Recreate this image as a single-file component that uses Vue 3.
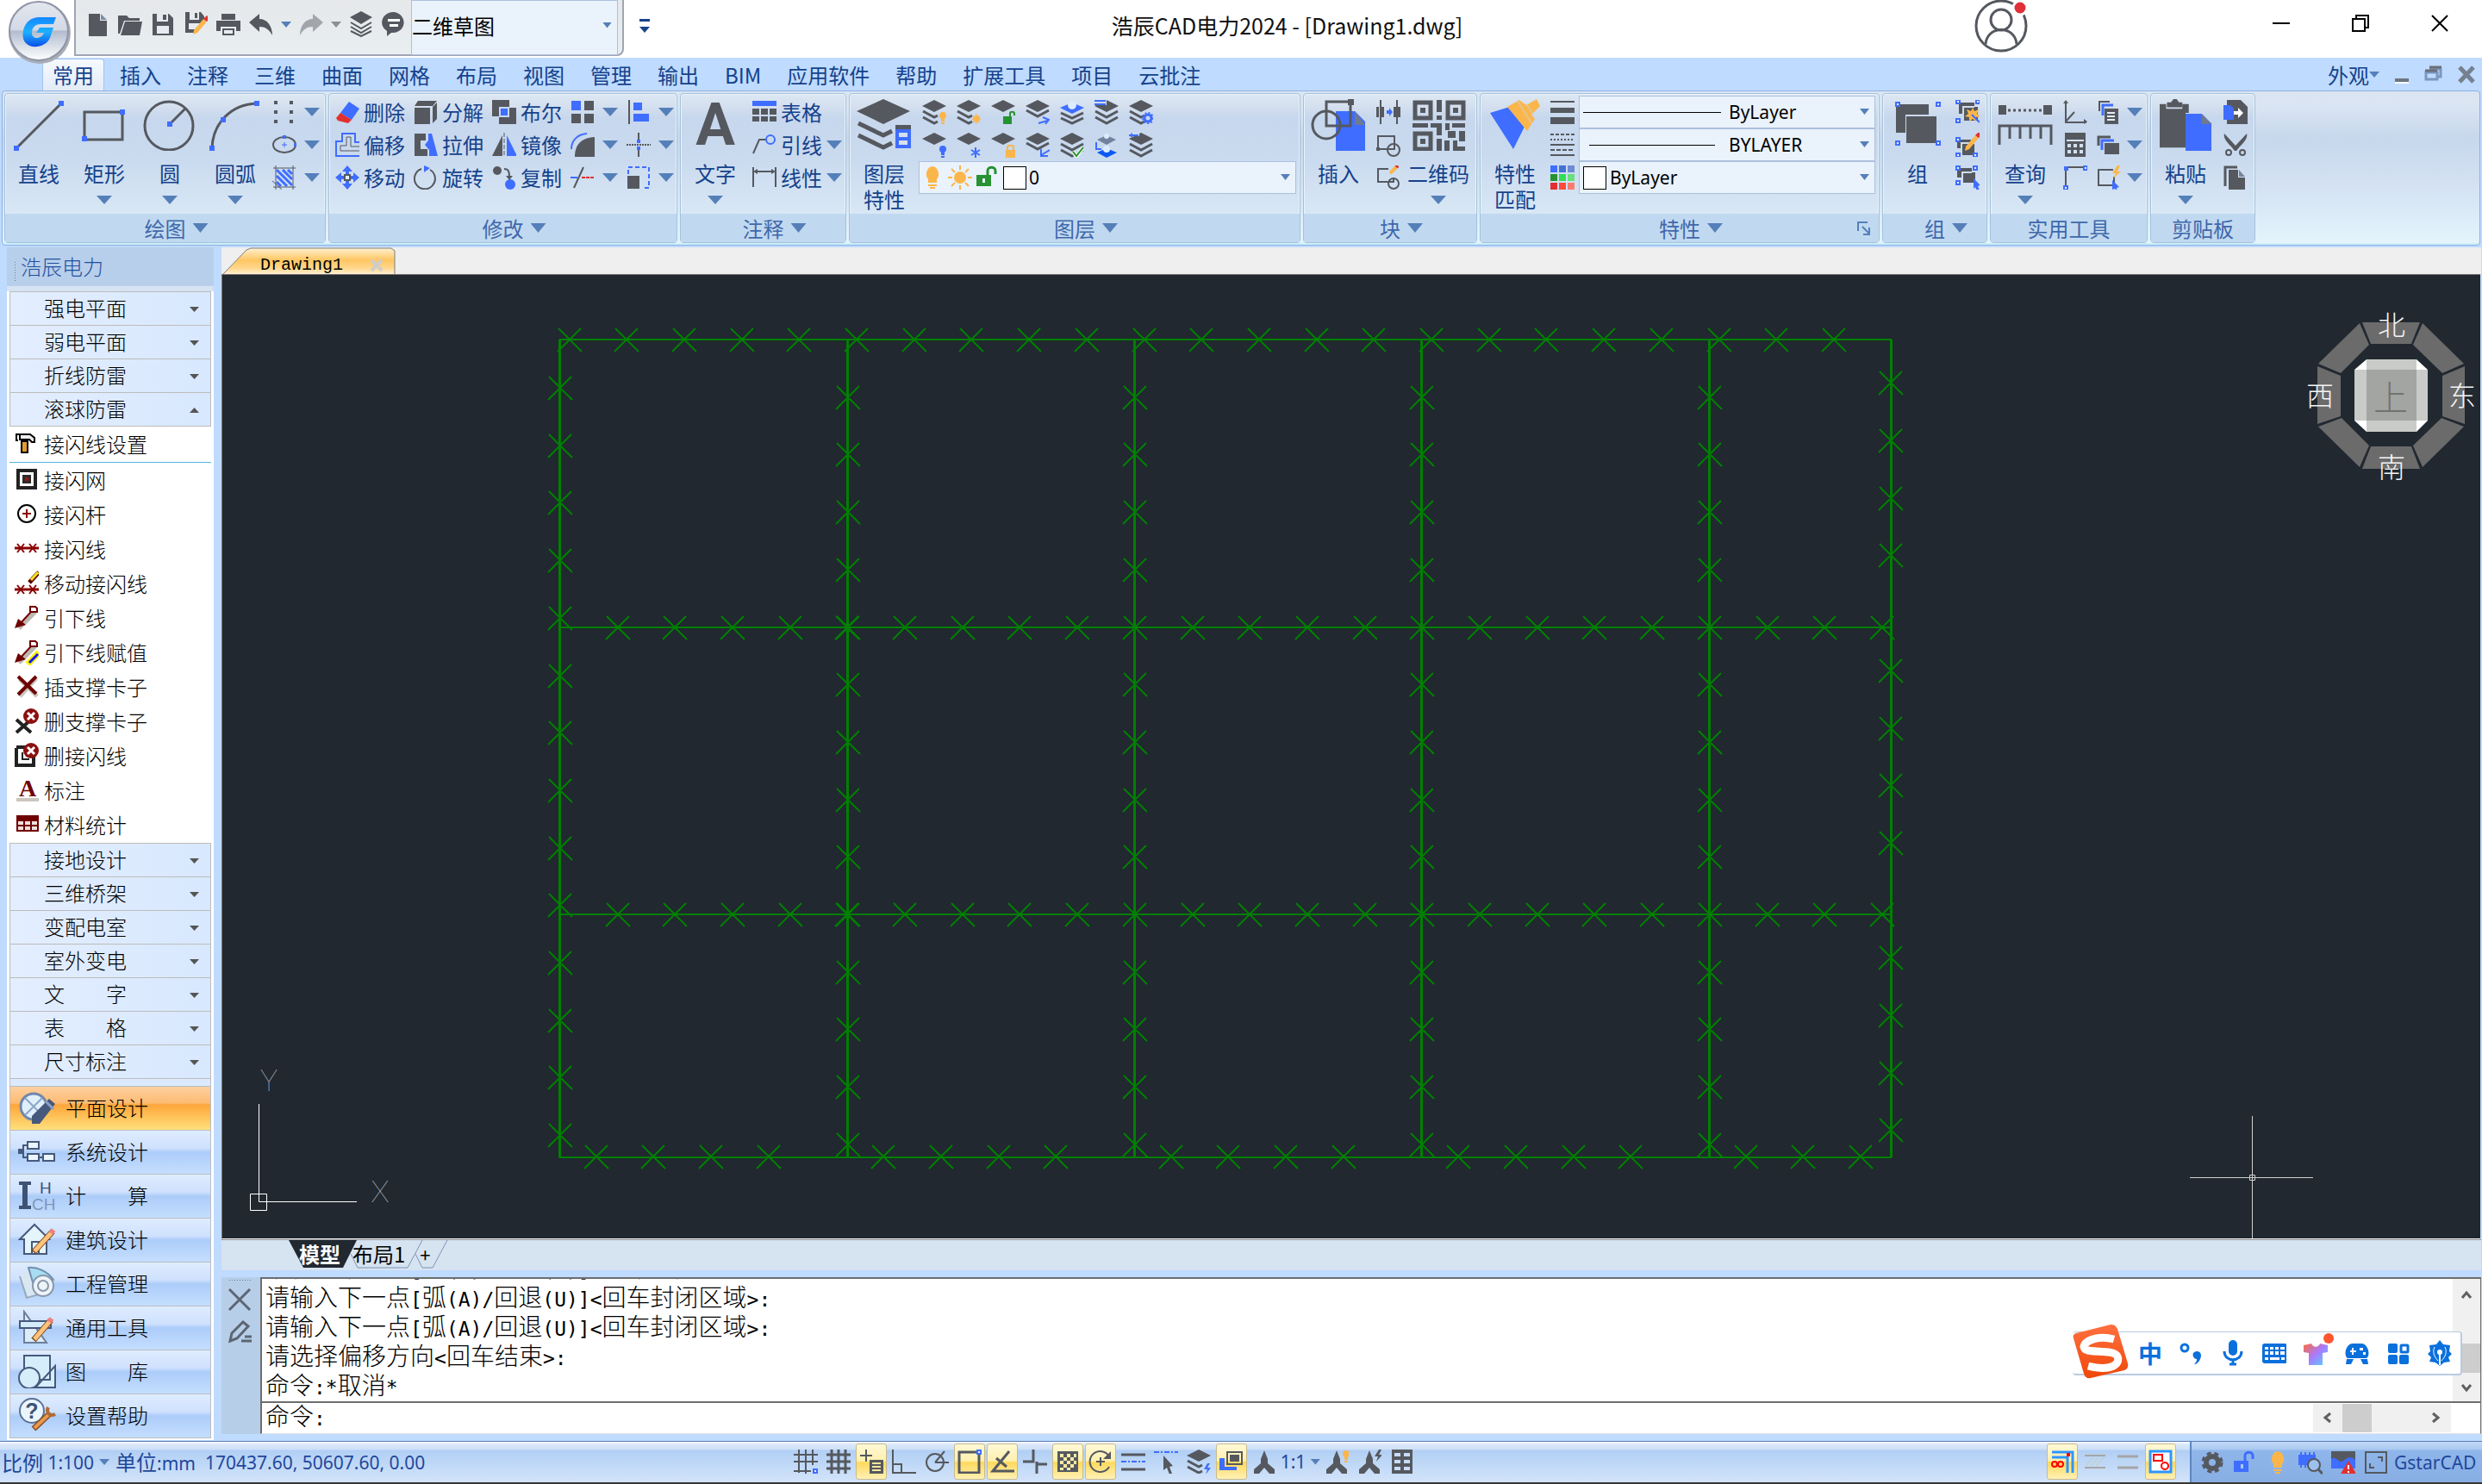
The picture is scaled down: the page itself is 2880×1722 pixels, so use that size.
<script setup>
import { h } from 'vue'

const D = '#55595f'
const B = '#3f6dff'
const O = '#fbb64b'
const G = '#279231'
const R = '#e23030'
const f = (c, p) => `<path fill="${c}" d="${p}"/>`
const s = (c, p, w = 2, extra = '') => `<path fill="none" stroke="${c}" stroke-width="${w}" ${extra} d="${p}"/>`

const top = f(D, 'M14 0L28 7 14 14 0 7z')
const stack = top + s(D, 'M1 13l13 7 13-7M1 20l13 7 13-7', 3)
const half = top + s(D, 'M1 13l13 7 4-2M1 20l13 7 4-2', 3)
const bulb = (x, y, c) => `<g fill="${c}"><circle cx="${x}" cy="${y}" r="4"/><path d="M${x - 2} ${y + 2}h4v5h-4zM${x - 2} ${y + 8}h4v2h-4z"/></g>`
const pencil = (x, y) => f(O, `M${x} ${y}l-11 13-1 5 5-2 11-13z`) + f(R, `M${x} ${y}l4-4 4 3-4 4z`)
const nodes = (c, list) => list.map(([x, y]) => `<rect x="${x - 2}" y="${y - 2}" width="4" height="4" fill="#e8f0ff" stroke="${c}" stroke-width="2"/>`).join('')
const dots = (c, list, r = 3) => list.map(([x, y]) => f(c, `M${x - r} ${y - r}h${2 * r}v${2 * r}h${-2 * r}z`)).join('')
const wire = c => s(c, 'M0 14h28', 3) + s(c, 'M3 9l8 10M11 9L3 19M17 9l8 10M25 9l-8 10', 2)
const person = f(D, 'M14 1l4 10v5l8 7v5h-6l-6-7-6 7H2v-5l8-7v-5z')

const icons = {
  newFile: f(D, 'M4 2h13v8h8v18H4z') + f('#7d8fa6', 'M18 2l7 7h-7z'),
  open: f(D, 'M0 4h10l3 3h12v3H7L2 25H0z') + f(D, 'M8 11h20l-3 16H3z'),
  save: f(D, 'M2 2h5v9h13V2h1l5 5v20H2z') + f(D, 'M14 3h4v6h-4z') + f('#e8ecf0', 'M7 16h14v9H7z'),
  saveAs: f(D, 'M2 0h5v9h11V0h2l4 5v7l-12 12H2z') + f(D, 'M13 1h3v6h-3z') + f('#e8ecf0', 'M6 13h13v7H6z') + pencil(23, 8),
  print: f(D, 'M6 2h16v7H6zM0 10h28v12h-5v-5H5v5H0z') + f(D, 'M7 19h14v8H7z') + f('#e8ecf0', 'M9 21h10v4H9z'),
  undo: f(D, 'M0 12L12 2v6c9 0 15 8 15 19-4-7-8-10-15-10v6z'),
  redo: f('#a2a6ab', 'M28 12L16 2v6C7 8 1 16 1 27c4-7 8-10 15-10v6z'),
  stack: f(D, 'M14 0l13 7-13 8L1 7z') + s(D, 'M2 13l12 7 12-7M2 18l12 7 12-7M2 23l12 6 12-6', 2),
  chat: f(D, 'M14 1a13 12 0 1 1-3 24l-5 4v-6A13 12 0 0 1 14 1z') + f('#fff', 'M7 9h14v3H7zM9 15h10v3H9z'),
  line: s(D, 'M6 57L58 5', 3) + dots(B, [[6, 57], [58, 5]], 3),
  rect: s(D, 'M9 15h44v32H9z', 3) + dots(B, [[53, 15], [9, 46]], 3),
  circle: `<circle cx="31" cy="31" r="28" fill="none" stroke="${D}" stroke-width="3"/>` + s(D, 'M32 29L50 11', 3) + dots(B, [[32, 29]], 3),
  arc: s(D, 'M5 57C6 27 28 6 57 5', 3) + dots(B, [[5, 57], [18, 24], [57, 5]], 3),
  points: dots(D, [[4, 3], [22, 3], [4, 14], [22, 14], [4, 25], [22, 25]], 2),
  ellipse: `<ellipse cx="14" cy="14" rx="13" ry="9" fill="none" stroke="${D}" stroke-width="2"/>` + s(B, 'M11 14h6M14 11v6', 1) + dots(B, [[14, 5], [27, 14]], 2),
  hatch: s(D, 'M1 3h26M4 0v28M24 0v28M1 25h26M0 18l11 10', 1) + s(B, 'M5 5l18 18M5 12l12 12M5 19l5 5M12 5l11 11M18 5l5 5', 3),
  erase: f(B, 'M16 2l12 8-9 13-13-8z') + f(R, 'M6 15l13 8-4 4-12-3-2-3z'),
  explode: f(D, 'M1 9h18v19H1zM5 1h22l-5 6H1z') + f(D, 'M22 8l5-5v19l-5 5z'),
  boolean: f(D, 'M0 0h20v9h8v19H8v-9H0z') + f('#c8d8ee', 'M8 8h12v12H8z') + f(B, 'M10 10h8v8h-8z'),
  array: f(B, 'M1 1h11v11H1z') + f(D, 'M16 1h11v11H16zM1 16h11v11H1zM16 16h11v11H16z'),
  align: f(D, 'M2 0h2v28H2z') + f(B, 'M8 3h10v9H8zM8 16h18v9H8z'),
  offset: s(B, 'M28 27H1V10h7V1h15v10h5', 2) + s(D, 'M28 21H6v-6h7V5h5v11h10', 1),
  stretch: f(D, 'M1 1h13v8H8v10h8v8H1z') + f(B, 'M17 1h4l7 26H18v-7l-5-6 4-5z'),
  mirror: f(D, 'M12 3v24H0z') + f(B, 'M17 3v24h12z') + s(D, 'M14 0v28', 1, 'stroke-dasharray="5 2"'),
  fillet: f(D, 'M5 28c0-14 7-22 23-23v23z') + s(B, 'M1 19C1 9 8 2 19 1', 2),
  breakLine: s(D, 'M14 0v8M14 20v8', 2) + s(D, 'M0 14h28', 2, 'stroke-dasharray="2 1"') + dots(B, [[14, 10], [14, 18]], 2),
  move: f(B, 'M14 0l6 7h-4v5h5V8l7 6-7 6v-4h-5v5h4l-6 7-6-7h4v-5H7v4l-7-6 7-6v4h5V7H8z') + f(D, 'M10 10h8v8h-8z') + f('#e8f0ff', 'M12 12h4v4h-4z'),
  rotate: s(D, 'M19 5A12 12 0 1 1 9 4', 2) + f(B, 'M12 0l7 3-7 5z'),
  copy: `<circle cx="6" cy="6" r="5" fill="${D}"/><circle cx="21" cy="22" r="6" fill="${B}"/>` + s(D, 'M14 4c5 0 6 3 6 9', 2) + f(D, 'M16 12h8l-4 5z'),
  trim: s(B, 'M0 14h8', 2) + s(R, 'M13 14h16', 2, 'stroke-dasharray="4 1"') + s(D, 'M4 26L15 2', 2),
  scale: s(B, 'M2 10V2h24v24h-8', 2, 'stroke-dasharray="5 3"') + f(D, 'M1 12h14v15H1z'),
  table: f(B, 'M0 1h28v6H0z') + f(D, 'M0 10h8v7H0zM10 10h8v7h-8zM20 10h8v7h-8zM0 19h8v6H0zM10 19h8v6h-8zM20 19h8v6h-8z'),
  leader: s(D, 'M1 24L8 8h8', 2) + `<circle cx="21" cy="8" r="5" fill="none" stroke="${B}" stroke-width="2"/>`,
  dim: s(D, 'M1 2v23M27 2v23M3 7h22', 2) + f(D, 'M1 7l5-3v6zM27 7l-5-3v6z'),
  layerBig: f(D, 'M31 0l31 14-31 15L0 14z') + s(D, 'M2 28l29 14 10-5M2 42l29 14 10-5', 5) + f(D, 'M45 30h18v5H45z') + f(B, 'M45 35h18v22H45z') + f('#d3e0f1', 'M49 39h10v5H49zM49 48h10v5H49z'),
  l1: half + bulb(24, 18, O), l2: half + `<circle cx="23" cy="22" r="4" fill="${O}"/>` + s(O, 'M17 22h12M23 16v12M19 18l8 8M27 18l-8 8', 1),
  l3: top + f(G, 'M14 19h10v9H14z') + s(G, 'M22 19v-3c0-3 5-3 5 0v2', 2), l4: top + s(D, 'M1 12l13 7 13-7', 3) + s(B, 'M15 27l11-3M20 20l7 3-4 5', 2),
  l5: f(B, 'M14 3l14 6-14 7L0 9z') + s(D, 'M1 15l13 6 13-6M1 21l13 6 13-6', 3) + `<circle cx="14" cy="6" r="5" fill="#dcebff"/>`,
  l6: stack + f('#cfdcee', 'M0 0h14v6H0z') + f(B, 'M0 0h13v2H0zM0 4h13v2H0z'), l7: half + `<circle cx="22" cy="21" r="4" fill="none" stroke="${B}" stroke-width="3" /><circle cx="22" cy="21" r="6" fill="none" stroke="${B}" stroke-width="2" stroke-dasharray="2 2"/>`,
  l8: top + bulb(24, 19, B), l9: top + s(B, 'M22 17v12M17 20l10 6M27 20l-10 6', 2), l10: top + f(O, 'M17 20h11v9H17z') + s(O, 'M19 20v-3c0-3 7-3 7 0v3', 2),
  l11: top + s(D, 'M1 12l13 7 13-7', 3) + s(B, 'M28 20l-10 6M18 19v8h8', 2), l12: stack + s('#e6f3ea', 'M15 22l4 5 8-10', 5) + s(G, 'M15 22l4 5 8-10', 2),
  l13: f('#70839f', 'M14 3l11 5-11 6L3 8z') + f('#0b59f0', 'M14 18l12 5-12 6L3 23z') + '<circle cx="14" cy="4" r="3" fill="#dcebff"/><circle cx="14" cy="19" r="4" fill="#dcebff"/>' + s(B, 'M2 11v8h6', 2),
  l14: stack + f('#cfdcee', 'M0 0h12v4H0z') + s(B, 'M0 3h11', 2) + f(B, 'M0 3l4-3v6z'),
  bulb: f(O, 'M14 1a8 9 0 0 1 5 15v4H9v-4A8 9 0 0 1 14 1zM9 22h10v2H9zM11 25h6v2h-6z'),
  sun: `<circle cx="14" cy="14" r="7" fill="${O}"/>` + s(O, 'M14 0v5M14 23v5M0 14h5M23 14h5M4 4l4 4M20 20l4 4M24 4l-4 4M4 24l4-4', 2),
  unlock: f(G, 'M1 11h17v13H1z') + s(G, 'M14 11V6c0-5 9-5 9 0v4', 3) + f('#eaf2fc', 'M8 15h3v5H8z'),
  insert: f(B, 'M29 14h22l12 12v34H29z') + f('#6d7a90', 'M51 14l12 16H51z') + s(D, 'M18 3h28v28H18z', 3) + `<circle cx="18" cy="30" r="16" fill="none" stroke="${D}" stroke-width="3"/>` + f(D, 'M43 0h7v7h-7z'),
  attr: s(D, 'M5 0v28M24 0v28', 2) + f(D, 'M0 8h3v12H0zM6 8h3v12H6zM20 8h9v12h-9z') + f(B, 'M12 12h3V9l4 5-4 5v-3h-3z'),
  shape: s(D, 'M2 4h19v15H2z', 2) + `<circle cx="20" cy="20" r="7" fill="none" stroke="${D}" stroke-width="2"/>` + dots(D, [[2, 19]], 2),
  shapeEdit: s(D, 'M14 4H2v15h18v-5', 2) + `<circle cx="20" cy="21" r="6" fill="none" stroke="${D}" stroke-width="2"/>` + s(O, 'M16 9l7-7', 4) + s(R, 'M23 2l2-2', 4),
  qr: s(D, 'M4 4h18v18H4zM42 4h18v18H42zM4 40h18v18H4z', 5) + f(D, 'M10 10h6v6h-6zM48 10h6v6h-6zM10 46h6v6h-6zM29 1h6v14h-6zM29 19h6v5h-6zM1 28h18v5H1zM22 28h13v14h-6v-9h-7zM29 46h6v15h-6zM39 28h5v8h-5zM47 28h15v5H47zM42 37h9v8h-9zM55 37h7v12h-7zM38 48h6v13h-6zM48 48h5v7h9v6H48z'),
  brush: f(B, 'M0 16l26-8 15 22-14 28z') + f(O, 'M20 9l14-8 8 6 12-7 4 8-10 10 4 5-9 14z') + s('#e4c58f', 'M32 2l16 26M42 6l8 11', 2),
  weight: f(D, 'M0 1h28v2H0zM0 9h28v6H0zM0 20h28v8H0z'),
  linetype: s(D, 'M0 2h28', 2, 'stroke-dasharray="4 2"') + s(D, 'M0 8h28', 2, 'stroke-dasharray="2 2"') + s(D, 'M0 14h28M0 26h28', 2) + s(D, 'M0 20h28', 2, 'stroke-dasharray="5 2"'),
  palette: f('#3f6dff', 'M0 0h8v8H0z') + f('#4470d8', 'M10 0h8v8h-8z') + f('#6f8ad5', 'M20 0h8v8h-8z') + f('#279231', 'M0 10h8v8H0z') + f('#34dc55', 'M10 10h8v8h-8z') + f('#68e07c', 'M20 10h8v8h-8z') + f('#e23030', 'M0 20h8v8H0z') + f('#ff4b3c', 'M10 20h8v8h-8z') + f('#ff7b70', 'M20 20h8v8h-8z'),
  group: f(D, 'M5 6h38v12H16v21H5z') + f(D, 'M17 20h35v31H17z') + nodes(B, [[7, 6], [54, 6], [7, 51], [54, 51]]),
  g1: f(D, 'M4 3h18v5h4v16H10v-8H4z') + s('#cfdcee', 'M9 16V8h13', 2) + f(O, 'M20 9l2 4 5-2-2 5 4 3-5 1v5l-4-3-4 3v-5l-5-1 4-3-2-5 5 2z') + s(B, 'M19 17l9 9', 2) + nodes(B, [[3, 2], [26, 2], [3, 24]]),
  g2: f(D, 'M2 8h16v5h4v13H8v-8H2z') + s('#cfdcee', 'M7 18v-6h10', 2) + pencil(23, 3) + nodes(B, [[3, 8], [3, 26], [23, 26]]),
  g3: f(D, 'M2 3h17v5h4v12H9v-6H2z') + s('#cfdcee', 'M8 14V8h11', 2) + nodes(B, [[3, 3], [23, 3], [3, 20]]) + f(B, 'M21 15l8 8-3 1 2 5-3 1-2-5-2 2z'),
  measure: f(D, 'M1 7h9v11H1zM53 7h10v11H53z') + s(D, 'M12 13h40', 3, 'stroke-dasharray="3 3"') + s(D, 'M2 53V31h60v22M14 32v14M26 32v14M38 32v14M50 32v14', 3),
  axes: s(D, 'M3 2v24h24M3 25l10-11', 2) + f(D, 'M3 0l3 4H0zM28 25l-4 3v-6z'),
  calc: f(D, 'M2 0h24v28H2z') + f('#d3e0f0', 'M4 8h20v2H4zM5 13h4v4H5zM12 13h4v4h-4zM19 13h4v4h-4zM5 20h4v4H5zM12 20h4v4h-4zM19 20h4v4h-4z'),
  snapEdge: s(D, 'M3 2h24M3 2v24', 2) + nodes(B, [[26, 3], [3, 26]]) + f(B, 'M1 1h5v5H1z'),
  u1: s(D, 'M3 13V2h12', 2) + s(B, 'M7 18V6h12', 3) + f(D, 'M9 10h16v18H9z') + f('#e4edf8', 'M12 14h9v2h-9zM12 18h9v2h-9zM12 22h9v2h-9z'),
  u2: s(D, 'M2 15V5h14', 3) + s(B, 'M6 20V9h14', 3) + f(D, 'M9 12h17v13H9z'),
  u3: s(D, 'M19 5H2v18h18V13', 2) + f(O, 'M24 0l-6 9h4l-3 6 9-8h-4l3-7z') + f(B, 'M18 17l8 8-3 1 1 4-3-3-3 1z'),
  paste: f(D, 'M0 6h8v6h20V6h8v11h-4v43H0z') + f(D, 'M9 4h5l3-4h4l3 4h4v6H9z') + f(B, 'M32 18h20l12 12v34H32z') + f('#6d7a90', 'M52 18l12 13H52z'),
  c1: f(D, 'M4 0h16l8 8v20H4z') + f(B, 'M0 6h8l4 4v13H0z') + f('#fff', 'M12 13h5V9l6 6-6 6v-4h-5z'),
  cut: f(D, 'M1 1l13 14L27 1c2 7-7 13-12 20h-2C8 14-1 8 1 1z') + `<g fill="none" stroke="${D}" stroke-width="2"><circle cx="6" cy="23" r="3"/><circle cx="22" cy="23" r="3"/></g>`,
  c3: s(D, 'M2 24V2h14', 3) + f(D, 'M6 5h11v9h8v15H6z') + f('#76859c', 'M18 5l7 8h-7z'),
  hammer: '<path fill="#eee" stroke="#000" stroke-width="2" d="M6 3h12l5 4v5h-3l-3-3H6z"/>' + s('#000', 'M6 3H2v7h2', 2) + '<path fill="#e39b2f" stroke="#000" stroke-width="2" d="M8 11h7v13H8z"/>',
  net: s('#222', 'M4 4h20v20H4z', 4) + f('#2b2b2b', 'M9 9h10v10H9z') + f('#a01010', 'M12 12h4v4h-4z'),
  rod: '<circle cx="14" cy="14" r="10" fill="none" stroke="#000" stroke-width="2"/>' + s('#8b0000', 'M9 14h10M14 9v10'),
  wire: wire('#8b0000'),
  wireMove: `<g transform="translate(0,8)">${wire('#8b0000')}</g>` + s('#5b0000', 'M17 14L28 2', 5) + s('#f2e51a', 'M19 11l8-9', 3),
  down: s('#bdb8b0', 'M5 27L24 8', 5) + s('#700000', 'M6 22L19 8') + '<path fill="#fff" stroke="#700000" stroke-width="2" d="M18 2h6l2 2v4h-8z"/>' + f('#700000', 'M0 27l4-11 9 7z'),
  downSet: s('#bdb8b0', 'M5 27L24 8', 5) + s('#700000', 'M6 22L19 8') + '<path fill="#fff" stroke="#700000" stroke-width="2" d="M18 2h6l2 2v4h-8z"/>' + f('#700000', 'M0 27l4-11 9 7z') + s('#fff200', 'M15 29L28 15', 7) + s('#1414ff', 'M17 27l10-10', 3),
  clip: s('#cbc6be', 'M6 6l20 20M25 5L6 26', 5) + s('#700000', 'M4 3l21 20M25 3L4 24', 4),
  clipDel: s('#222', 'M2 13l17 15M19 13L2 28', 4) + '<circle cx="19" cy="9" r="9" fill="#8b1010"/>' + s('#fff', 'M15 5l8 8M23 5l-8 8', 3),
  wireDel: s('#222', 'M2 6v20h20V14M2 5h12', 4) + s('#222', 'M9 11v8h8', 2) + '<circle cx="19" cy="9" r="9" fill="#8b1010"/>' + s('#fff', 'M15 5l8 8M23 5l-8 8', 3),
  letter: f('#cbc6be', 'M2 24h26v4H2z') + '<text x="15" y="22" text-anchor="middle" font-family="Liberation Serif, serif" font-weight="700" font-size="28" fill="#700000">A</text>',
  stat: f('#700000', 'M2 4h26v19H2z') + f('#f0e0e0', 'M4 11h6v4H4zM12 11h6v4h-6zM20 11h6v4h-6zM4 17h6v4H4zM12 17h6v4h-6zM20 17h6v4h-6z'),
  plan: '<circle cx="18" cy="19" r="15" fill="#dff0fb" stroke="#7187ad" stroke-width="3"/>' + s('#8da5c6', 'M8 9l20 20M28 9L8 29', 2) + f('#46597c', 'M36 10l7 6L25 39h-9v-9z') + s('#8ba0c2', 'M32 13l9 9', 3),
  system: '<g fill="#eaf6fd" stroke="#46597c" stroke-width="2"><path d="M11 9h13v8H11zM11 23h13v8H11zM29 23h13v8H29z"/></g>' + s('#46597c', 'M11 13H6v14h5M24 27h5M1 20h5') + dots('#46597c', [[3, 20]], 3),
  calcBig: f('#3e5275', 'M1 4h14v4h-4v24h4v4H1v-4h4V8H1z') + '<g font-family="Liberation Sans, sans-serif"><text x="25" y="18" font-size="19" fill="#3e5275">H</text><text x="16" y="37" font-size="19" fill="#7f95ba">CH</text></g>',
  house: '<path fill="#e4f5fc" stroke="#46597c" stroke-width="2" d="M2 20L19 3l17 17h-3v17H7V20z"/>' + s('#46597c', 'M16 37V23h8v14') + s('#7a4a20', 'M18 35L40 11', 7) + s('#ffc27a', 'M19 34l20-22', 5) + s('#f08080', 'M38 13l3-4', 6),
  manage: f('#d9e7f3', 'M2 12l10-8 12 30-12 4z') + s('#9aaabd', 'M2 12l8 25 14-4') + '<path fill="#a8dcf3" stroke="#7190ae" stroke-width="2" d="M12 2c10-1 22 4 29 14L18 22z"/><circle cx="29" cy="23" r="12" fill="#eef3f8" stroke="#8798ac" stroke-width="2"/><circle cx="29" cy="23" r="6" fill="none" stroke="#8798ac" stroke-width="2"/>',
  tools: '<path fill="#dcebf8" stroke="#6d7f9c" stroke-width="2" d="M7 2l26 36H7z"/><path fill="#d4ecfb" stroke="#46597c" stroke-width="2" d="M2 13h36v8H2z"/>' + s('#7a4a20', 'M18 35L38 12', 7) + s('#ffc27a', 'M19 34l18-21', 5) + s('#f08080', 'M36 14l3-4', 6),
  library: '<g fill="#d5eefa" stroke="#46597c" stroke-width="2"><path d="M7 2h30v28H7zM43 14v25H20z"/><circle cx="13" cy="28" r="12"/></g>',
  help: '<circle cx="16" cy="15" r="14" fill="#eaf6fd" stroke="#5b7196" stroke-width="2"/><text x="16" y="24" text-anchor="middle" font-family="Liberation Sans, sans-serif" font-weight="700" font-size="25" fill="#3e5275">?</text>' + s('#8a4f22', 'M18 36L36 19', 7) + s('#e89a50', 'M19 35l17-16', 4) + s('#b06a35', 'M35 11c-3 6 2 11 8 8', 4),
  grid1: s(D, 'M6 0v27M14 0v28M22 0v18M0 6h28M0 14h28M0 25h20', 2) + nodes(B, [[25, 25]]),
  grid2: s(D, 'M6 0v28M14 0v28M22 0v28M0 6h28M0 14h28M0 22h28', 3),
  dyn: s(D, 'M8 0v14M1 7h14', 2) + f(D, 'M12 12h16v16H12z') + f('#ffe79a', 'M15 15h10v2H15zM15 19h10v2H15zM15 23h10v2H15z'),
  ortho: s(D, 'M1 0v27h27M2 17h9v9', 2), polar: `<circle cx="12" cy="15" r="10" fill="none" stroke="${D}" stroke-width="2"/>` + s(D, 'M12 15h16M12 15L23 2', 2),
  osnap: s(D, 'M2 3h23v24H2z', 3) + nodes(B, [[25, 3]]), track: s(D, 'M22 2L3 25h25M7 10l12 10', 3),
  cross: s(D, 'M12 0v14H0M15 17h13M16 14v14', 3),
  trans: f(D, 'M2 2h24v24H2z') + f('#ffeaa5', 'M5 5h4v4H5zM13 5h4v4h-4zM9 9h4v4H9zM17 9h4v4h-4zM5 13h4v4H5zM13 13h4v4h-4zM9 17h4v4H9zM17 17h4v4h-4zM5 21h4v3H5zM13 21h4v3h-4zM21 5h3v4h-3zM21 13h3v4h-3z'),
  cycle: s(D, 'M24 8A12 12 0 1 0 24 20M14 9v10M9 14h10', 2) + f(D, 'M26 2v9h-9z'),
  lwt: s(D, 'M0 6h28M0 23h28', 3) + s(B, 'M0 14h28', 2, 'stroke-dasharray="6 2 2 2"'),
  sel: s(B, 'M0 3h28', 2, 'stroke-dasharray="6 2 2 2"') + f(D, 'M11 7l11 12-4 1 3 8-3 1-3-8-4 3z'),
  layerFlash: half + f(B, 'M24 16l-4 7h4l-2 6 6-8h-4l3-5z'),
  windows: f(B, 'M0 10h6v10h14v4H0z') + s(D, 'M9 3h17v14H9z', 2) + f(D, 'M12 6h11v8H12z'),
  person, personBulb: person + bulb(25, 5, O), personFlash: person + f(D, 'M25 0l-5 8h4l-2 6 7-8h-4l3-6z'),
  cells: f(D, 'M2 0h24v28H2z') + f('#c9dcf6', 'M5 4h7v4H5zM16 4h7v4h-7zM5 12h7v4H5zM16 12h7v4h-7zM5 20h7v4H5zM16 20h7v4h-7z'),
  r1: s('#2e96ff', 'M2 3h24v24M2 9h18v18', 3) + '<g fill="none" stroke="#f00" stroke-width="2"><circle cx="5" cy="17" r="3"/><circle cx="12" cy="17" r="3"/></g>' + f('#f00', 'M19 4h4v4h-4z'),
  r2: s('#a6a6a6', 'M2 7h24M2 21h24', 2) + s('#c9d0a0', 'M3 19l9-10M9 19l9-10M15 19l9-10', 1), r3: s('#a6a6a6', 'M2 8h24M2 21h24', 3),
  r4: '<path fill="#fff" stroke="#2e96ff" stroke-width="3" d="M2 2h24v24H2z"/>' + s('#f00', 'M6 6h10v7H6z', 2) + '<circle cx="19" cy="19" r="4" fill="none" stroke="#f00" stroke-width="2"/>',
  gear: `<circle cx="14" cy="14" r="7" fill="none" stroke="${D}" stroke-width="6"/>` + `<circle cx="14" cy="14" r="11" fill="none" stroke="${D}" stroke-width="3" stroke-dasharray="5 4"/>`,
  unlockB: f(B, 'M1 12h17v13H1z') + s(B, 'M14 12V6c0-5 9-5 9 0v4', 3) + f('#a8c8f4', 'M9 16h3v5H9z'),
  chip: f(B, 'M0 5h20v12H0zM2 2h2v18H2zM7 2h2v18H7zM12 2h2v4h-2zM17 2h2v4h-2z') + `<circle cx="18" cy="17" r="7" fill="#9ec0ee" stroke="${D}" stroke-width="2"/>` + s(D, 'M23 22l5 5', 3),
  perf: f(D, 'M0 1h28v12H0z') + f(B, 'M0 10c6-5 8 6 14 2s8-6 14-1v10H0z') + f(R, 'M20 12l9 15H11z') + f('#fff', 'M19 17h2v5h-2zM19 24h2v2h-2z'),
  full: s(D, 'M2 2h24v24H2zM16 8h5v5M12 20H7v-5', 2),
  mic: f('#0a70dc', 'M9 5a5 5 0 0 1 10 0v8a5 5 0 0 1-10 0z') + s('#0a70dc', 'M4 13c0 13 20 13 20 0M14 23v5M10 28h8', 3),
  kbd: '<rect x="0" y="3" width="29" height="23" rx="3" fill="#0a70dc"/>' + f('#fff', 'M3 7h4v3H3zM9 7h4v3H9zM15 7h4v3h-4zM21 7h5v3h-5zM3 12h4v4H3zM9 12h4v4H9zM15 12h4v4h-4zM21 12h5v4h-5zM3 19h4v3H3zM9 19h11v3H9zM22 19h4v3h-4z'),
  shirt: '<defs><linearGradient id="sh" x1="0" y1="0" x2="1" y2="1"><stop offset="0" stop-color="#ff6a3a"/><stop offset=".5" stop-color="#a77bff"/><stop offset="1" stop-color="#52d8ff"/></linearGradient></defs><path fill="url(#sh)" d="M0 5l9-2c2 5 8 5 10 0l9 2v8l-6 1v14H6V14l-6-1z"/>',
  pad: f('#0a70dc', 'M9 3h10c8 0 11 14 6 17H3C-2 17 1 3 9 3zM2 21h8l-3 6H1zM18 21h8l1 6h-6z') + s('#fff', 'M6 12h7M9 8v8', 2) + f('#fff', 'M17 8h4v3h-4zM21 13h3v3h-3z'),
  apps: '<g fill="#0a70dc"><rect x="2" y="3" width="11" height="11" rx="2"/><rect x="2" y="16" width="11" height="11" rx="2"/><rect x="15" y="16" width="11" height="11" rx="2"/></g><rect x="17" y="5" width="8" height="8" rx="1" fill="none" stroke="#0a70dc" stroke-width="3"/>',
  pen: f('#0a70dc', 'M14 0l4 5 8 1-1 7 3 3-4 4 2 5-7 1-5 4-5-4-7-1 2-5-4-4 3-3-1-7 8-1z') + s('#fff', 'M14 16v13', 2) + s('#fff', 'M8 8c-3 6 0 12 4 16M20 8c3 6 0 12-4 16', 1) + '<circle cx="14" cy="14" r="3" fill="#fff"/>',
  punct: '<circle cx="6" cy="8" r="4" fill="none" stroke="#0a70dc" stroke-width="3"/>' + f('#0a70dc', 'M17 13c6-3 10 2 7 8-2 4-4 6-7 6 3-3 3-4 3-6-4 0-6-6-3-8z'),
  closeX: s('#5c6672', 'M2 2l24 24M26 2L2 26', 3),
  editCmd: s('#5c6672', 'M3 25l2-9L18 3l6 5-13 14zM16 25h12M20 20h8', 3),
}

const Icon = props => h('svg', {
  viewBox: `0 0 ${props.w || 28} ${props.h || 28}`,
  width: props.w || 28,
  height: props.h || 28,
  'aria-hidden': 'true',
  innerHTML: icons[props.name],
})
Icon.props = ['name', 'w', 'h']

const tabs = ['常用', '插入', '注释', '三维', '曲面', '网格', '布局', '视图', '管理', '输出', 'BIM', '应用软件', '帮助', '扩展工具', '项目', '云批注']
const modify = [
  [['erase', '删除'], ['offset', '偏移'], ['move', '移动']],
  [['explode', '分解'], ['stretch', '拉伸'], ['rotate', '旋转']],
  [['boolean', '布尔'], ['mirror', '镜像'], ['copy', '复制']],
]
const modifyMore = [['array', 'fillet', 'trim'], ['align', 'breakLine', 'scale']]
const groupsTop = ['强电平面', '弱电平面', '折线防雷', '滚球防雷']
const tools = [['net', '接闪网'], ['rod', '接闪杆'], ['wire', '接闪线'], ['wireMove', '移动接闪线'], ['down', '引下线'], ['downSet', '引下线赋值'], ['clip', '插支撑卡子'], ['clipDel', '删支撑卡子'], ['wireDel', '删接闪线'], ['letter', '标注'], ['stat', '材料统计']]
const groupsBottom = ['接地设计', '三维桥架', '变配电室', '室外变电', '文　　字', '表　　格', '尺寸标注']
const modules = [['plan', '平面设计'], ['system', '系统设计'], ['calcBig', '计　　算'], ['house', '建筑设计'], ['manage', '工程管理'], ['tools', '通用工具'], ['library', '图　　库'], ['help', '设置帮助']]

const STEP = 66.7
const marks = []
const along = (x, y, n, dx, dy, gaps = false) => {
  for (let i = 0; i < n; i++) {
    if (gaps && i % 5 === 4) continue
    marks.push([Math.round(x + dx * i), Math.round(y + dy * i)])
  }
}
along(660.5, 394, 23, STEP, 0)
along(716.5, 728, 23, STEP, 0)
along(716.5, 1061, 23, STEP, 0)
along(691.6, 1342, 23, STEP, 0, true)
along(650, 450, 14, 0, STEP)
along(2194, 444.3, 14, 0, STEP, true)
const columns = [984, 1317, 1650, 1984]
columns.forEach(x => along(x, 460.7, 14, 0, STEP))
const markPath = marks.map(([x, y]) => `M${x - 13} ${y - 13}l27 27M${x + 13} ${y - 13}l-27 27`).join('')

const history = ['请输入下一点[弧(A)/回退(U)]<回车封闭区域>:', '请输入下一点[弧(A)/回退(U)]<回车封闭区域>:', '请输入下一点[弧(A)/回退(U)]<回车封闭区域>:', '请选择偏移方向<回车结束>:', '命令:*取消*']
const runs = line => line.match(/[\x00-\x7f]+|[^\x00-\x7f]+/g).map(t => ({ t, latin: t.charCodeAt(0) < 128 }))

const toggles = [['grid1'], ['grid2'], ['dyn', 1], ['ortho'], ['polar'], ['osnap', 1], ['track', 1], ['cross'], ['trans', 1], ['cycle', 1], ['lwt'], ['sel'], ['layerFlash'], ['windows', 1], ['person']]
const ring = ['101,44 168,44 158,69 111,69', '171,45 219,92 194,103 160,70', '220,95 220,162 194,153 194,106', '219,165 171,212 160,187 193,155', '168,214 101,214 111,188 158,188', '98,212 50,165 77,155 109,187', '49,162 49,95 76,106 76,153', '50,92 98,45 109,70 76,103']
</script>

<template>
  <div class="app">
    <header class="titlebar">
      <button class="appbtn" aria-label="应用程序菜单">
        <svg width="78" height="76" viewBox="0 0 78 76">
          <defs>
            <linearGradient id="orb" x1="0" y1="0" x2="0" y2="1"><stop offset="0" stop-color="#e3e7ee" /><stop offset=".48" stop-color="#d3d9e6" /><stop offset=".5" stop-color="#b2bccf" /><stop offset="1" stop-color="#fff" /></linearGradient>
            <linearGradient id="gg" x1="0" y1="0" x2="0" y2="1"><stop offset="0" stop-color="#1487ff" /><stop offset=".5" stop-color="#1fb0ff" /><stop offset="1" stop-color="#0a4fe8" /></linearGradient>
          </defs>
          <circle cx="38" cy="38" r="36" fill="#a9adb8" /><circle cx="37" cy="36" r="34" fill="url(#orb)" stroke="#8f95a5" stroke-width="2" />
          <path fill="url(#gg)" d="M57 20H36C20 21 15 40 21 49c7 9 24 6 29-5l4-12H38l-4 6h9c-2 7-14 9-14 0 0-6 4-10 10-10h15z" />
        </svg>
      </button>
      <div class="qat">
        <button aria-label="新建"><Icon name="newFile" /></button><button aria-label="打开"><Icon name="open" /></button><button aria-label="保存"><Icon name="save" /></button><button aria-label="另存为"><Icon name="saveAs" /></button><button aria-label="打印"><Icon name="print" /></button><button aria-label="放弃"><Icon name="undo" /></button>
        <i class="mini" /><button aria-label="重做"><Icon name="redo" /></button><i class="mini gray" />
        <button aria-label="图层"><Icon name="stack" h="30" /></button><button aria-label="反馈"><Icon name="chat" h="30" /></button>
        <div class="combo workspace"><select aria-label="工作空间"><option>二维草图</option></select></div>
      </div>
      <button class="custom" aria-label="自定义"><i class="mini" /></button>
      <h1>浩辰CAD电力2024 - [Drawing1.dwg]</h1>
      <div class="winbtns">
        <button class="user" aria-label="用户"><svg width="62" height="62" viewBox="0 0 62 62" fill="none" stroke="#55595f" stroke-width="3"><circle cx="31" cy="30" r="29" /><circle cx="31" cy="23" r="12" /><path d="M13 51c2-22 34-22 36 0" /><circle cx="53" cy="9" r="8" fill="#e0303a" stroke="#fff" /></svg></button>
        <button aria-label="最小化"><svg width="22" height="22"><path d="M1 11h20" stroke="#000" stroke-width="2" /></svg></button>
        <button aria-label="还原"><svg width="22" height="22" fill="none" stroke="#000" stroke-width="2"><path d="M2 6h14v14H2zM6 5V2h14v14h-4" /></svg></button>
        <button aria-label="关闭"><svg width="22" height="22"><path d="M2 2l18 18M20 2L2 20" stroke="#000" stroke-width="2" /></svg></button>
      </div>
    </header>

    <nav class="tabs">
      <button v-for="(t, i) in tabs" :key="t" :class="{ on: i === 0 }">{{ t }}</button>
      <div class="docbtns">
        <button class="look">外观<i class="mini" /></button>
        <button aria-label="最小化文档"><svg width="20" height="24"><path d="M2 18h16" stroke="#6d7683" stroke-width="4" /><path d="M2 21h16" stroke="#fff" stroke-width="2" /></svg></button>
        <button aria-label="还原文档"><svg width="22" height="24" fill="none"><path d="M2 9h13v8H2zM6 5h13v9h-4" stroke="#7c96c0" stroke-width="3" /><path d="M1 7h14M6 3h14" stroke="#6a6f78" stroke-width="3" /></svg></button>
        <button aria-label="关闭文档"><svg width="22" height="24"><path d="M3 3l16 17M19 3L3 20" stroke="#76818f" stroke-width="5" /></svg></button>
      </div>
    </nav>

    <section class="ribbon">
      <div class="panel draw">
        <div class="body">
          <button class="big"><Icon name="line" w="64" h="60" /><span>直线</span></button>
          <button class="big"><Icon name="rect" w="64" h="60" /><span>矩形</span><i class="tri" /></button>
          <button class="big"><Icon name="circle" w="64" h="60" /><span>圆</span><i class="tri" /></button>
          <button class="big"><Icon name="arc" w="64" h="60" /><span>圆弧</span><i class="tri" /></button>
          <div class="col"><button v-for="n in ['points', 'ellipse', 'hatch']" :key="n" class="cmd wide" :aria-label="n"><Icon :name="n" /><i class="tri" /></button></div>
        </div>
        <footer>绘图<i class="tri" /></footer>
      </div>
      <div class="panel modify">
        <div class="body">
          <div v-for="(c, i) in modify" :key="i" class="col"><button v-for="[n, t] in c" :key="n" class="cmd"><Icon :name="n" />{{ t }}</button></div>
          <div v-for="(c, i) in modifyMore" :key="i" class="col"><button v-for="n in c" :key="n" class="cmd wide" :aria-label="n"><Icon :name="n" /><i class="tri" /></button></div>
        </div>
        <footer>修改<i class="tri" /></footer>
      </div>
      <div class="panel note">
        <div class="body">
          <button class="big"><b class="bigA">A</b><span>文字</span><i class="tri" /></button>
          <div class="col">
            <button class="cmd"><Icon name="table" />表格</button>
            <button class="cmd"><Icon name="leader" />引线<i class="tri" /></button>
            <button class="cmd"><Icon name="dim" />线性<i class="tri" /></button>
          </div>
        </div>
        <footer>注释<i class="tri" /></footer>
      </div>
      <div class="panel layers">
        <div class="body">
          <button class="big"><Icon name="layerBig" w="64" h="60" /><span>图层<br>特性</span></button>
          <div class="fill">
            <div v-for="r in 2" :key="r" class="strip"><button v-for="k in 7" :key="k" :aria-label="`图层工具 ${(r - 1) * 7 + k}`"><Icon :name="'l' + ((r - 1) * 7 + k)" h="29" /></button></div>
            <div class="combo layer"><div class="pre"><Icon name="bulb" /><Icon name="sun" /><Icon name="unlock" /><i class="swatch" /></div><select aria-label="图层"><option>0</option></select></div>
          </div>
        </div>
        <footer>图层<i class="tri" /></footer>
      </div>
      <div class="panel block">
        <div class="body">
          <button class="big"><Icon name="insert" w="64" h="60" /><span>插入</span></button>
          <div class="col"><button v-for="n in ['attr', 'shape', 'shapeEdit']" :key="n" class="cmd" :aria-label="n"><Icon :name="n" /></button></div>
          <button class="big"><Icon name="qr" w="63" h="60" /><span>二维码</span><i class="tri" /></button>
        </div>
        <footer>块<i class="tri" /></footer>
      </div>
      <div class="panel props">
        <div class="body">
          <button class="big"><Icon name="brush" w="58" h="60" /><span>特性<br>匹配</span></button>
          <div class="col"><button v-for="n in ['weight', 'linetype', 'palette']" :key="n" class="cmd" :aria-label="n"><Icon :name="n" /></button></div>
          <div class="fill">
            <div class="combo lw"><div class="pre"><i class="rule" /></div><select aria-label="线宽"><option>ByLayer</option></select></div>
            <div class="combo lw"><div class="pre"><i class="rule short" /></div><select aria-label="线型"><option>BYLAYER</option></select></div>
            <div class="combo color"><div class="pre"><i class="swatch" /></div><select aria-label="颜色"><option>ByLayer</option></select></div>
          </div>
        </div>
        <footer>特性<i class="tri" /><svg class="launch" width="18" height="18" fill="none" stroke="#5580bd" stroke-width="2"><path d="M2 12V2h11M7 7l8 8M15 8v8H8" /></svg></footer>
      </div>
      <div class="panel group">
        <div class="body">
          <button class="big"><Icon name="group" w="60" h="60" /><span>组</span></button>
          <div class="col"><button v-for="n in ['g1', 'g2', 'g3']" :key="n" class="cmd" :aria-label="n"><Icon :name="n" /></button></div>
        </div>
        <footer>组<i class="tri" /></footer>
      </div>
      <div class="panel util">
        <div class="body">
          <button class="big"><Icon name="measure" w="64" h="60" /><span>查询</span><i class="tri" /></button>
          <div class="col"><button v-for="n in ['axes', 'calc', 'snapEdge']" :key="n" class="cmd" :aria-label="n"><Icon :name="n" /></button></div>
          <div class="col"><button v-for="n in ['u1', 'u2', 'u3']" :key="n" class="cmd tight" :aria-label="n"><Icon :name="n" /><i class="tri" /></button></div>
        </div>
        <footer>实用工具</footer>
      </div>
      <div class="panel clipb">
        <div class="body">
          <button class="big"><Icon name="paste" w="64" h="64" /><span>粘贴</span><i class="tri" /></button>
          <div class="col"><button v-for="n in ['c1', 'cut', 'c3']" :key="n" class="cmd" :aria-label="n"><Icon :name="n" /></button></div>
        </div>
        <footer>剪贴板</footer>
      </div>
    </section>

    <main class="main">
      <aside class="side">
        <h2>浩辰电力</h2>
        <div class="list">
          <button v-for="(g, i) in groupsTop" :key="g" class="grp" :class="{ open: i === 3 }">{{ g }}</button>
          <button class="tool first"><Icon name="hammer" />接闪线设置</button>
          <button v-for="[n, t] in tools" :key="n" class="tool"><Icon :name="n" h="30" />{{ t }}</button>
          <button v-for="g in groupsBottom" :key="g" class="grp">{{ g }}</button>
          <div class="spacer" />
          <button v-for="([n, t], i) in modules" :key="n" class="mod" :class="{ on: i === 0 }"><Icon :name="n" w="44" h="40" />{{ t }}</button>
        </div>
      </aside>

      <div class="work">
        <div class="files">
          <button class="file">
            <svg class="shape" width="202" height="32"><defs><linearGradient id="ft" x1="0" y1="0" x2="0" y2="1"><stop offset="0" stop-color="#fff0cf" /><stop offset=".45" stop-color="#ffc662" /><stop offset=".75" stop-color="#ffd78c" /><stop offset="1" stop-color="#fff4de" /></linearGradient></defs><path d="M1 32L29 3l5-2h163l4 3v28" fill="url(#ft)" stroke="#7f7f7f" /></svg>
            <span>Drawing1</span>
            <svg class="x" width="16" height="16"><path d="M2 2l12 12M14 2L2 14" stroke="#cfcdc8" stroke-width="4" /></svg>
          </button>
        </div>
        <div class="canvas">
          <svg class="drawing" width="2400" height="1118">
            <g transform="translate(-258,-319)">
              <g stroke="#008000" fill="none">
                <path stroke-width="2" d="M649 394H2195M650 728H2194M650 1061H2194M649 1343H2195" />
                <path stroke-width="3" d="M649.5 394V1343M2194.5 394V1343" />
                <path v-for="x in columns" :key="x" stroke-width="3" :d="`M${x - 0.5} 394V1343`" />
                <path stroke-width="2" :d="markPath" />
              </g>
              <g stroke="#fff" fill="none"><path d="M300.500 1281V1394.500H414M290.500 1385.500h19v19h-19z" /></g>
              <g fill="#fff" font-family="Lato, sans-serif" font-weight="100" font-size="35"><text x="312" y="1266" text-anchor="middle">Y</text><text x="441" y="1395" text-anchor="middle">X</text></g>
            </g>
          </svg>
          <svg class="cursor" width="144" height="144" fill="none" stroke="#cfcfcf"><path d="M0 71.500H143M72.500 0V143M69.500 68.500h6v6h-6z" /></svg>
          <svg class="compass" width="240" height="260">
            <polygon v-for="p in ring" :key="p" :points="p" fill="#6b6b6b" />
            <path fill="#fff" d="M106 87h58l13 12v59l-13 13h-58l-14-13V99z" />
            <path fill="#c9cbc9" d="M106 87h58v84h-58zM92 99h85v59H92z" /><path fill="#a3a5a3" d="M106 99h58v59h-58z" />
            <g fill="#f4f4f4" text-anchor="middle" font-size="32" font-weight="300" font-family="'Noto Sans CJK SC', sans-serif"><text x="135" y="59">北</text><text x="52" y="141">西</text><text x="217" y="141">东</text><text x="135" y="224">南</text><text x="134" y="146" font-size="40" fill="#70726f">上</text></g>
          </svg>
        </div>
        <div class="layouts">
          <svg class="shape" width="270" height="34"><path d="M78 0h79l-16 32h-46z" fill="#212830" /><path d="M150 16l8 16h58l17-32M225 16l8 16h12l17-32" fill="none" stroke="#7f93b8" /></svg>
          <button class="model">模型</button><button class="lay">布局1</button><button class="add">+</button>
        </div>
        <section class="cmdline">
          <div class="grip">
            <i class="dots" /><button aria-label="关闭"><Icon name="closeX" /></button><button aria-label="编辑"><Icon name="editCmd" /></button>
          </div>
          <div class="console">
            <div class="log">
              <div class="lines"><p v-for="(l, i) in history" :key="i"><span v-for="(r, k) in runs(l)" :key="k" :class="{ latin: r.latin }">{{ r.t }}</span></p></div>
              <div class="vscroll"><svg width="32" height="143" fill="none" stroke="#606060" stroke-width="3"><path fill="#cdcdcd" stroke="none" d="M0 75h32v34H0z" /><path d="M11 22l5-6 5 6M11 123l5 6 5-6" /></svg></div>
            </div>
            <div class="prompt">
              <label for="cmd">命令<span class="latin">:</span></label><input id="cmd" type="text">
              <div class="hscroll"><svg width="160" height="33" fill="none" stroke="#606060" stroke-width="3"><path fill="#cdcdcd" stroke="none" d="M34 0h34v33H34z" /><path d="M20 11l-6 5 6 5M139 11l6 5-6 5" /></svg></div>
            </div>
          </div>
          <div class="ime">
            <svg class="logo" width="66" height="64"><defs><linearGradient id="so" x1="0" y1="0" x2="0" y2="1"><stop offset="0" stop-color="#ff7040" /><stop offset="1" stop-color="#ef4708" /></linearGradient></defs><path fill="url(#so)" d="M4 10L44 0c4 0 6 1 8 5l12 40c1 4-1 7-4 8l-39 9c-4 1-7-1-8-5L1 16c-1-3 0-5 3-6z" /><path fill="none" stroke="#fff" stroke-width="9" d="M48 17C26 11 9 22 14 28s34 0 38 9-8 18-34 11" /></svg>
            <span class="zh">中</span><Icon name="punct" /><Icon name="mic" h="30" /><Icon name="kbd" /><span class="skin"><Icon name="shirt" h="29" /></span><Icon name="pad" /><Icon name="apps" /><Icon name="pen" h="30" />
          </div>
        </section>
      </div>
    </main>

    <footer class="status">
      <div class="info"><button>比例 <span class="en">1:100</span><i class="mini" /></button><span>单位<span class="en">:mm</span></span><span class="en coords">170437.60, 50607.60, 0.00</span></div>
      <div class="toggles">
        <button v-for="[n, on] in toggles" :key="n" :class="{ on }" :aria-label="n"><Icon :name="n" /></button>
        <button class="ratio en">1:1<i class="mini" /></button>
        <button v-for="n in ['personBulb', 'personFlash', 'cells']" :key="n" :aria-label="n"><Icon :name="n" /></button>
      </div>
      <div class="toggles right"><button v-for="(n, i) in ['r1', 'r2', 'r3', 'r4']" :key="n" :class="{ on: i === 0 || i === 3 }" :aria-label="n"><Icon :name="n" /></button></div>
      <div class="tray"><button v-for="n in ['gear', 'unlockB', 'bulb', 'chip', 'perf', 'full']" :key="n" :aria-label="n"><Icon :name="n" /></button><span class="en">GstarCAD</span></div>
    </footer>
  </div>
</template>

<style>
body { background: #bfdbff; }
</style>

<style scoped>
* { box-sizing: border-box; }
.app { display: flex; flex-direction: column; min-height: 100vh; overflow: hidden; font-family: "Noto Sans CJK SC", sans-serif; font-size: 24px; line-height: 30px; color: #15428b; background: #bfdbff; }
button { font: inherit; color: inherit; background: none; border: 0; padding: 0; display: flex; align-items: center; justify-content: center; white-space: nowrap; }
svg { display: block; flex: none; }
h1, h2, p { margin: 0; font-weight: inherit; font-size: inherit; }
.en { font-family: "Noto Sans", sans-serif; font-size: 21px; }
.tri { width: 18px; height: 10px; background: #557fb9; clip-path: polygon(0 0, 100% 0, 50% 100%); flex: none; }
.mini { width: 12px; height: 7px; background: #557fb9; clip-path: polygon(0 0, 100% 0, 50% 100%); flex: none; }
.mini.gray { background: #8d8f93; }

.titlebar { position: relative; height: 67px; background: #fff; display: flex; align-items: flex-start; }
.appbtn { position: absolute; left: 8px; top: 0; z-index: 3; }
.qat { margin-left: 86px; width: 638px; height: 65px; display: flex; align-items: center; padding-left: 6px; background: linear-gradient(#e6e8ea, #e8eef1); border: 1px solid #a0a5b4; border-width: 0 2px 2px 2px; border-radius: 0 0 8px 0; }
.qat button { flex: none; width: 38px; height: 56px; align-self: flex-start; }
.qat > .mini { margin: 25px 4px 0; align-self: flex-start; width: 12px; }
.workspace { flex: none; width: 240px; margin-left: auto; margin-right: 5px; height: 64px; border-width: 0 1px; }
.custom { width: 12px; margin: 22px 0 0 18px; padding-top: 6px; border-top: 3px solid #15428b; }
.custom .mini { background: #15428b; }
h1 { position: absolute; left: 0; right: 0; top: 11px; margin-left: 107px; text-align: center; color: #111; font-size: 25px; line-height: 36px; pointer-events: none; }
.winbtns { margin-left: auto; display: flex; padding-right: 3px; }
.winbtns button { width: 92px; height: 54px; }
.winbtns .user { width: 62px; height: 62px; margin-right: 248px; }

.tabs { display: flex; height: 38px; padding: 1px 0 0 46px; }
.tabs > button { margin: 0 3px; padding: 0 12px; height: 37px; border-radius: 4px 4px 0 0; }
.tabs > .on { background: linear-gradient(#f5faff, #e3ebf6); border: 1px solid #a3c3ef; border-bottom: 0; padding: 0 11px; }
.docbtns { margin-left: auto; display: flex; align-items: center; padding-right: 7px; gap: 16px; }

.ribbon { display: flex; gap: 3px; margin: 0 2px 2px; padding: 2px; border: 1px solid #8db2e3; border-radius: 4px; background: linear-gradient(#dbe5f2 0, #dae5f3 10%, #c7d7ec 30%, #d3e1f2 60%, #e4f5fd 100%); box-shadow: inset 0 -2px 0 #cdeefa; }
.panel { flex: none; border: 1px solid #a3c2dc; border-radius: 4px; box-shadow: inset 0 0 0 1px #eaf3fb; background: linear-gradient(#dde7f3 0, #d5e0ef 8%, #c7d7ed 16%, #c9d9ee 40%, #d8e7f5 80%); }
.body { height: 139px; display: flex; padding-top: 2px; }
.panel footer { height: 33px; background: #c1d9f0; display: flex; align-items: center; justify-content: center; gap: 8px; color: #3f68ab; position: relative; }
.panel footer .tri { height: 11px; margin-right: -26px; }
.launch { position: absolute; right: 8px; top: 8px; }
.draw { width: 373px; } .modify { width: 405px; } .note { width: 193px; } .layers { width: 524px; } .block { width: 202px; } .props { width: 464px; } .group { width: 122px; } .util { width: 183px; } .clipb { width: 122px; }
.big { width: 80px; flex: none; flex-direction: column; justify-content: flex-start; padding-top: 4px; line-height: 30px; }
.big svg { height: 60px; }
.big span { margin-top: 11px; }
.big .tri { margin-top: 11px; }
.draw .body { padding-left: 1px; }
.draw .big { width: 76px; }
.block .big:last-child { width: 76px; margin-left: 6px; }
.bigA { font: 700 68px/60px Roboto, sans-serif; color: #55595f; height: 60px; }
.col { display: flex; flex-direction: column; flex: none; }
.cmd { height: 38px; gap: 5px; justify-content: flex-start; }
.cmd.wide { gap: 9px; }
.draw .col { padding-left: 5px; }
.modify .body { padding-left: 7px; gap: 10px; }
.note .col { padding-left: 3px; }
.block .col { padding-left: 4px; }
.props .col { padding-left: 1px; }
.group .col, .util .col, .clipb .col { padding-left: 4px; }
.util .col + .col { padding-left: 11px; }
.cmd.tight { gap: 7px; }
.fill { flex: 1; padding-right: 4px; }
.strip { display: flex; height: 38px; margin-left: -2px; }
.strip button { width: 40px; }
.combo { position: relative; background: #eaf2fb; border: 1px solid #abc1de; }
.combo select { width: 100%; height: 100%; appearance: none; border: 0; background: none; font: 21px/30px "Noto Sans", sans-serif; color: #000; padding: 0; }
.combo::after { content: ""; position: absolute; right: 6px; top: 14px; width: 11px; height: 7px; background: #557fb9; clip-path: polygon(0 0, 100% 0, 50% 100%); }
.workspace::after { top: 25px; }
.workspace select { font: 24px/30px "Noto Sans CJK SC", sans-serif; padding: 0 0 3px 0; }
.layer, .lw, .color { height: 38px; }
.props .fill { padding-left: 5px; }
.pre { position: absolute; left: 4px; top: 0; height: 36px; display: flex; align-items: center; gap: 4px; pointer-events: none; }
.swatch { width: 27px; height: 27px; background: #fff; border: 1px solid #000; }
.rule { width: 160px; height: 1px; background: #000; }
.rule.short { width: 146px; margin-left: 7px; }
.layer select { padding-left: 127px; }
.layer .pre { left: 1px; }
.lw select { padding-left: 173px; }
.color select { padding-left: 35px; }

.main { flex: 1; display: flex; padding: 0 1px 0 8px; gap: 9px; }
.side { width: 240px; flex: none; background: #fff; margin-bottom: 1px; }
.side h2 { height: 45px; padding-left: 16px; background: #b8cfeb; line-height: 44px; position: relative; color: #1f4f9f; font-weight: 300; }
.side h2::before { content: ""; position: absolute; left: 8px; top: 16px; width: 3px; height: 24px; background: radial-gradient(#6b7f9c 1px, transparent 1px) 0 0 / 3px 3px; }
.list { border-top: 6px solid #d6e3f3; padding: 0 3px 2px; color: #000; font-weight: 300; }
.list button { width: 100%; justify-content: flex-start; padding-bottom: 2px; }
.list .grp { height: 39px; padding-left: 39px; border: 1px solid #bcbcbc; border-bottom: 0; background: linear-gradient(90deg, #e3eeff, #d8e8fe); position: relative; }
.grp::after { content: ""; position: absolute; right: 13px; top: 17px; width: 11px; height: 6px; background: #555; clip-path: polygon(0 0, 100% 0, 50% 100%); }
.grp.open::after { transform: rotate(180deg); }
.tool { height: 40px; padding-left: 6px; gap: 6px; }
.tool.first { height: 43px; border-top: 1px solid #bcbcbc; border-bottom: 1px solid #52b4e0; margin-bottom: 1px; }
.spacer { height: 9px; border: 1px solid #bcbcbc; border-bottom: 0; background: #dceaff; }
.mod { height: 51px; padding-left: 9px; gap: 11px; border: 1px solid #b9bdc6; border-bottom: 0; background: linear-gradient(#dfecff 0, #cfe1fd 40%, #acccf9 50%, #c5defe 100%); }
.mod.on { background: linear-gradient(#fdd0a0 0, #fdbb72 38%, #fda63a 42%, #ffe07c 100%); }
.mod:last-child { height: 52px; border-bottom: 1px solid #b9bdc6; }

.work { flex: 1; min-width: 0; display: flex; flex-direction: column; }
.files { height: 31px; background: #efefef; display: flex; }
.file { position: relative; width: 202px; font: 20px/24px "Liberation Mono", monospace; color: #000; justify-content: flex-start; padding: 10px 0 0 45px; gap: 31px; }
.file span, .file .x { position: relative; }
.shape { position: absolute; left: 0; top: 0; }
.canvas { position: relative; flex: 1; min-height: 900px; background: #212830; border: 1px solid #73706c; border-right: 0; border-bottom-color: #fff; overflow: hidden; margin-right: 1px; }
.drawing { position: absolute; left: 0; top: 0; }
.compass { position: absolute; right: -2px; top: 11px; }
.cursor { position: absolute; right: 193px; bottom: -2px; }
.layouts { position: relative; height: 36px; background: #d6e3f1; display: flex; align-items: center; color: #000; border-top: 1px solid #8a8a8a; padding-bottom: 4px; }
.layouts button { position: relative; }
.model { margin-left: 90px; font-weight: 700; color: #fff; }
.lay { margin-left: 14px; }
.add { margin-left: 17px; font-size: 22px; }
.cmdline { position: relative; display: flex; margin: 8px 0 8px; height: 182px; }
.grip { width: 45px; background: #b7cee9; display: flex; flex-direction: column; align-items: center; gap: 9px; padding: 2px 3px 0 0; }
.dots { width: 27px; height: 4px; background: radial-gradient(#67758a 1px, transparent 1px) 0 0 / 3px 3px; margin-bottom: -3px; }
.console { flex: 1; min-width: 0; background: #fff; border: 1px solid #6d6d6d; border-width: 2px 1px 1px 2px; border-bottom-color: #e4e4e4; color: #000; font-size: 28px; font-weight: 300; display: flex; flex-direction: column; }
.log { flex: 1; min-height: 0; display: flex; border-bottom: 2px solid #6d6d6d; }
.lines { flex: 1; min-width: 0; overflow: hidden; display: flex; flex-direction: column; justify-content: flex-end; padding: 0 0 3px 4px; }
.lines p { height: 34px; line-height: 34px; flex: none; white-space: nowrap; }
.latin { font-family: "DejaVu Sans Mono", monospace; font-size: 23px; }
.vscroll { width: 32px; background: #f0f0f0; }
.prompt { height: 35px; display: flex; align-items: center; padding-left: 4px; }
.prompt label { padding-bottom: 3px; }
.prompt input { flex: 1; border: 0; padding: 0; font: inherit; background: none; height: 30px; min-width: 0; }
.hscroll { width: 160px; margin-right: 34px; background: #f0f0f0; }
.ime { position: absolute; right: 22px; top: 63px; height: 51px; display: flex; align-items: center; gap: 20px; padding: 0 10px 0 76px; background: #fff; border: 1px solid #b9cbe2; border-width: 1px 2px 2px 0; border-radius: 4px; }
.logo { position: absolute; left: 0; top: -9px; }
.zh { width: 28px; font-size: 28px; font-weight: 700; color: #0a70dc; }
.skin { position: relative; }
.skin::after { content: ""; position: absolute; right: -7px; top: -9px; width: 12px; height: 12px; border-radius: 6px; background: #ff5530; }

.status { height: 50px; display: flex; align-items: center; position: relative; border-top: 1px solid #567db0; border-bottom: 2px solid #393636; background: linear-gradient(#fff 0, #dbe8fb 3px, #cbdff9 9px, #b1cff4 10px, #d3e4fa 100%); }
.info { display: flex; align-items: center; padding-left: 2px; color: #1f479b; }
.info button { white-space: pre; }
.info .mini { margin: 0 7px 0 6px; }
.coords { margin-left: 11px; }
.toggles { position: absolute; left: 916px; top: 2px; display: flex; }
.toggles button { width: 36px; height: 42px; margin: 0 1px; border: 1px solid transparent; border-radius: 3px; }
.toggles .on { border-color: #c9bb8c; background: linear-gradient(#fff8d6 0, #fff0ad 48%, #ffd95c 52%, #fff1b5 100%); }
.toggles .ratio { width: 44px; gap: 5px; color: #1f479b; }
.toggles.right { left: auto; right: 354px; }
.tray { margin-left: auto; width: 339px; height: 100%; border-left: 2px solid #5c86c2; background: linear-gradient(#c3d9f7 0, #a9c8f2 9px, #8fb6ea 10px, #88aee4 100%); display: flex; align-items: center; padding-left: 5px; }
.tray button { width: 38px; }
.tray .en { margin-left: 2px; color: #1f479b; }
</style>
